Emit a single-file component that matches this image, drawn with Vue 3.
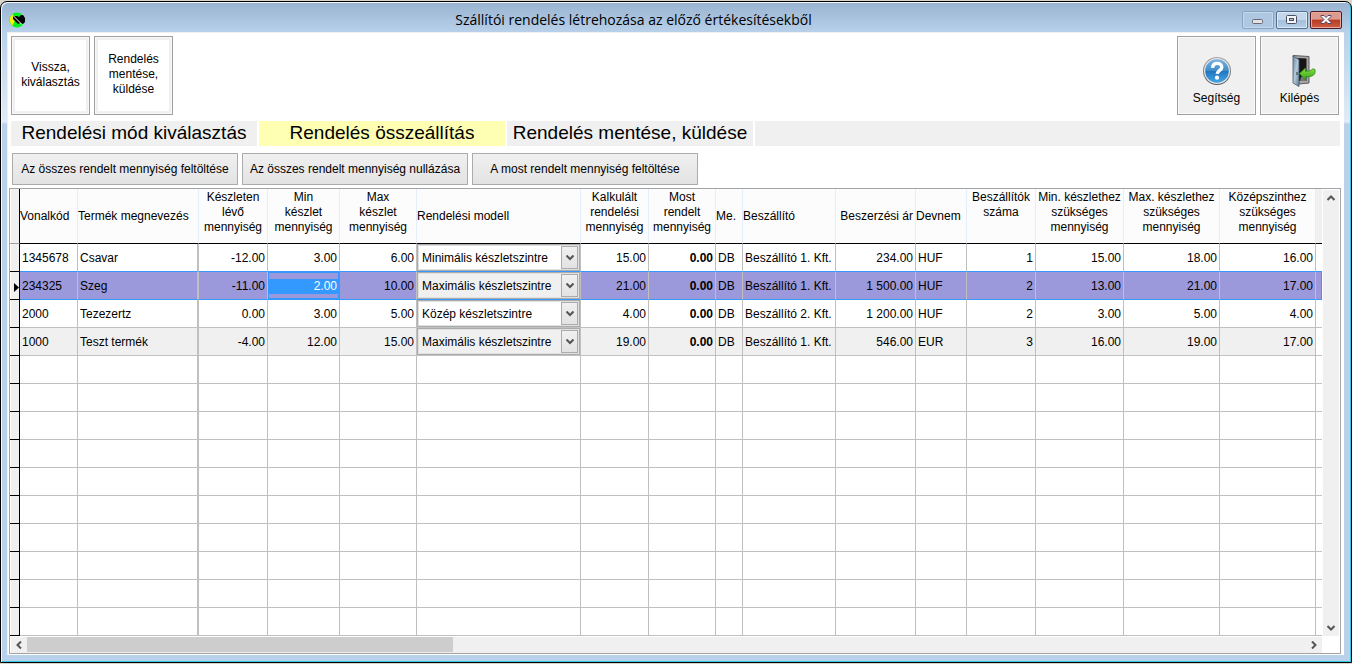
<script setup>
import { ref } from 'vue'

const models = ['Minimális készletszintre', 'Maximális készletszintre', 'Közép készletszintre']

const columns = [
  { key: 'code', label: 'Vonalkód', cls: 'c-code start' },
  { key: 'name', label: 'Termék megnevezés', cls: 'c-name start' },
  { key: 'stock', label: 'Készleten\nlévő\nmennyiség', cls: 'c-stock num' },
  { key: 'min', label: 'Min\nkészlet\nmennyiség', cls: 'c-min num' },
  { key: 'max', label: 'Max\nkészlet\nmennyiség', cls: 'c-max num' },
  { key: 'model', label: 'Rendelési modell', cls: 'c-model start' },
  { key: 'calc', label: 'Kalkulált\nrendelési\nmennyiség', cls: 'c-calc num' },
  { key: 'now', label: 'Most\nrendelt\nmennyiség', cls: 'c-now num strong' },
  { key: 'unit', label: 'Me.', cls: 'c-unit start' },
  { key: 'supplier', label: 'Beszállító', cls: 'c-supplier start' },
  { key: 'price', label: 'Beszerzési ár', cls: 'c-price num single' },
  { key: 'currency', label: 'Devnem', cls: 'c-currency start' },
  { key: 'suppliers', label: 'Beszállítók\nszáma', cls: 'c-suppliers num' },
  { key: 'needMin', label: 'Min. készlethez\nszükséges\nmennyiség', cls: 'c-needmin num' },
  { key: 'needMax', label: 'Max. készlethez\nszükséges\nmennyiség', cls: 'c-needmax num' },
  { key: 'needMid', label: 'Középszinthez\nszükséges\nmennyiség', cls: 'c-needmid num' },
]

const rows = ref([
  { code: '1345678', name: 'Csavar', stock: '-12.00', min: '3.00', max: '6.00', model: models[0], calc: '15.00', now: '0.00', unit: 'DB', supplier: 'Beszállító 1. Kft.', price: '234.00', currency: 'HUF', suppliers: '1', needMin: '15.00', needMax: '18.00', needMid: '16.00' },
  { code: '234325', name: 'Szeg', stock: '-11.00', min: '2.00', max: '10.00', model: models[1], calc: '21.00', now: '0.00', unit: 'DB', supplier: 'Beszállító 1. Kft.', price: '1 500.00', currency: 'HUF', suppliers: '2', needMin: '13.00', needMax: '21.00', needMid: '17.00' },
  { code: '2000', name: 'Tezezertz', stock: '0.00', min: '3.00', max: '5.00', model: models[2], calc: '4.00', now: '0.00', unit: 'DB', supplier: 'Beszállító 2. Kft.', price: '1 200.00', currency: 'HUF', suppliers: '2', needMin: '3.00', needMax: '5.00', needMid: '4.00' },
  { code: '1000', name: 'Teszt termék', stock: '-4.00', min: '12.00', max: '15.00', model: models[1], calc: '19.00', now: '0.00', unit: 'DB', supplier: 'Beszállító 1. Kft.', price: '546.00', currency: 'EUR', suppliers: '3', needMin: '16.00', needMax: '19.00', needMid: '17.00' },
])
const selected = ref(1)
const emptyRows = 10
</script>

<template>
  <div class="desktop">
    <div class="window">
      <header class="titlebar">
        <svg class="app-icon" viewBox="0 0 16 16" aria-hidden="true">
          <circle cx="8" cy="8" r="7.5" fill="#00f01e" />
          <path d="M3.5 2.2A7.5 7.5 0 0 0 3.5 13.8L6 8Z" fill="#fff200" />
          <path d="M4 4H8L10 5L12 3H14L16 6V10L14 12L11 11L9 12L4 7Z" fill="#000" />
          <path d="M4 3.5L13 12.5" stroke="#fff" stroke-width="1" />
        </svg>
        <h1>Szállítói rendelés létrehozása az előző értékesítésekből</h1>
        <div class="win-buttons">
          <button class="win-btn dim" aria-label="Kis méret">
            <svg viewBox="0 0 30 16"><rect x="9.5" y="7.5" width="10" height="4" rx="1" fill="#e4e4e4" stroke="#686878" /></svg>
          </button>
          <button class="win-btn" aria-label="Teljes méret">
            <svg viewBox="0 0 30 16"><rect x="9.5" y="3.5" width="10" height="8" rx="1" fill="#f4f4f4" stroke="#4a5064" /><rect x="12.5" y="6.5" width="4" height="2" fill="#a9c0da" stroke="#4a5064" /></svg>
          </button>
          <button class="win-btn close" aria-label="Bezárás">
            <svg viewBox="0 0 30 16"><path d="M10 3.5H13L15 5.5L17 3.5H20V4.5L17 7.5L20 10.5V11.5H17L15 9.5L13 11.5H10V10.5L13 7.5L10 4.5Z" fill="#fafafa" stroke="#54486a" /></svg>
          </button>
        </div>
      </header>

      <main class="client">
        <div class="toolbar">
          <button class="tile framed">Vissza,<br />kiválasztás</button>
          <button class="tile framed">Rendelés<br />mentése,<br />küldése</button>
          <span class="spacer"></span>
          <button class="tile plain">
            <svg class="tile-icon" viewBox="0 0 32 32" aria-hidden="true">
              <defs>
                <linearGradient id="blue" x1="0" y1="0" x2="0" y2="1">
                  <stop offset="0" stop-color="#7fb3dd" />
                  <stop offset="0.48" stop-color="#3f8ccb" />
                  <stop offset="0.52" stop-color="#2277bf" />
                  <stop offset="1" stop-color="#45a5e6" />
                </linearGradient>
                <linearGradient id="rim" x1="0" y1="0" x2="0" y2="1">
                  <stop offset="0" stop-color="#a8a8a8" />
                  <stop offset="1" stop-color="#5c5c5c" />
                </linearGradient>
              </defs>
              <circle cx="16" cy="16" r="14" fill="url(#rim)" />
              <circle cx="16" cy="16" r="13" fill="#dfe5ea" />
              <circle cx="16" cy="16" r="11.8" fill="url(#blue)" />
              <path d="M11.6 12.8C11.8 9.6 13.6 8.4 16.2 8.4C19 8.4 20.8 10 20.8 12.2C20.8 15.4 16.4 15.2 16.2 18.8" fill="none" stroke="#fff" stroke-width="3.4" />
              <circle cx="16" cy="22.7" r="2.1" fill="#fff" />
            </svg>
            <span>Segítség</span>
          </button>
          <button class="tile plain">
            <svg class="tile-icon" viewBox="0 0 32 32" aria-hidden="true">
              <defs>
                <linearGradient id="door" x1="0" y1="0" x2="1" y2="1">
                  <stop offset="0" stop-color="#6f8ba2" />
                  <stop offset="0.5" stop-color="#b4c9d9" />
                  <stop offset="1" stop-color="#5f7d96" />
                </linearGradient>
                <linearGradient id="arrow" x1="0" y1="0" x2="0" y2="1">
                  <stop offset="0" stop-color="#8ee04a" />
                  <stop offset="1" stop-color="#2fa012" />
                </linearGradient>
              </defs>
              <path d="M9 0.5L25 1.5V28L15 29Z" fill="#a6a6a6" stroke="#5d5d5d" />
              <path d="M11 3L22.5 3.5V26H15Z" fill="#151515" />
              <path d="M17 22L22.5 19V26H16Z" fill="#777" />
              <path d="M9 1L15 4.5V31.5L9 28Z" fill="url(#door)" stroke="#48586a" stroke-width="0.8" />
              <path d="M13 17V20" stroke="#26323e" />
              <path d="M15.5 18.5L21.5 13V16.3C25 16.3 27.5 15.8 28.6 13.8L31 14.5C32 20 28.5 22 21.5 21.8V25Z" fill="url(#arrow)" stroke="#2b9410" stroke-width="0.8" />
            </svg>
            <span>Kilépés</span>
          </button>
        </div>

        <ol class="steps">
          <li>Rendelési mód kiválasztás</li>
          <li class="current" aria-current="step">Rendelés összeállítás</li>
          <li>Rendelés mentése, küldése</li>
          <li class="rest" aria-hidden="true"></li>
        </ol>

        <div class="actions">
          <button>Az összes rendelt mennyiség feltöltése</button>
          <button>Az összes rendelt mennyiség nullázása</button>
          <button>A most rendelt mennyiség feltöltése</button>
        </div>

        <section class="grid">
          <div class="viewport">
            <table>
              <colgroup>
                <col class="c-mark" />
                <col v-for="c in columns" :key="c.key" :class="c.cls.split(' ')[0]" />
                <col />
              </colgroup>
              <thead>
                <tr>
                  <th class="mark"></th>
                  <th v-for="c in columns" :key="c.key" scope="col" :class="c.cls">{{ c.label }}</th>
                  <th class="fill"></th>
                </tr>
              </thead>
              <tbody>
                <tr v-for="(r, i) in rows" :key="r.code" :class="{ alt: i === 3, selected: i === selected, before: i === selected - 1 }" @click="selected = i">
                  <td class="mark">
                    <svg v-if="i === selected" viewBox="0 0 5 9" aria-hidden="true"><path d="M0 0L5 4.5L0 9Z" /></svg>
                  </td>
                  <td v-for="c in columns" :key="c.key" :class="[c.cls, { editing: i === selected && c.key === 'min' }]">
                    <div v-if="c.key === 'model'" class="combo">
                      <select v-model="r.model" :aria-label="'Rendelési modell: ' + r.name">
                        <option v-for="m in models" :key="m">{{ m }}</option>
                      </select>
                      <span class="drop" aria-hidden="true">
                        <svg viewBox="0 0 8 6"><path d="M0.5 0.5L4 4L7.5 0.5" /></svg>
                      </span>
                    </div>
                    <input v-else-if="i === selected && c.key === 'min'" v-model="r.min" type="text" :aria-label="'Min készlet mennyiség: ' + r.name" />
                    <template v-else>{{ r[c.key] }}</template>
                  </td>
                  <td class="fill"></td>
                </tr>
                <tr v-for="n in emptyRows" :key="'e' + n" class="empty">
                  <td class="mark"></td>
                  <td v-for="c in columns" :key="c.key" :class="c.cls"></td>
                  <td class="fill"></td>
                </tr>
              </tbody>
            </table>
          </div>
          <div class="vscroll">
            <button aria-label="Fel"><svg viewBox="0 0 8 6"><path d="M0.5 5L4 1.5L7.5 5" /></svg></button>
            <button aria-label="Le"><svg viewBox="0 0 8 6"><path d="M0.5 1L4 4.5L7.5 1" /></svg></button>
          </div>
          <div class="hscroll">
            <button aria-label="Balra"><svg viewBox="0 0 6 8"><path d="M5 0.5L1.5 4L5 7.5" /></svg></button>
            <div class="track"><div class="thumb"></div></div>
            <button aria-label="Jobbra"><svg viewBox="0 0 6 8"><path d="M1 0.5L4.5 4L1 7.5" /></svg></button>
          </div>
        </section>
      </main>
    </div>
  </div>
</template>

<style>
html,
body {
  margin: 0;
  background: #dcdcdc;
}
</style>

<style scoped>
* {
  box-sizing: border-box;
}
.desktop {
  min-height: 100vh;
  padding: 1px 0;
  background: #d8d6cc;
  font: 12px/15px "Liberation Sans", Arial, sans-serif;
  color: #000;
  display: flex;
}
button,
input,
select {
  font: inherit;
  color: inherit;
  margin: 0;
}
svg {
  display: block;
}
.window {
  flex: 1;
  min-width: 0;
  display: flex;
  flex-direction: column;
  padding: 1px 7px 7px 6px;
  border: 1px solid #000;
  border-radius: 7px 7px 0 0;
  box-shadow: inset 1px 1px #f2f7fc, inset -1px -1px #35c8e4;
  background: linear-gradient(#98b3d1 0, #b9d1ea 31px, #e2ebf6 120px, #b9d1ea 122px);
}
.titlebar {
  display: flex;
  align-items: flex-start;
  height: 29px;
  padding: 0 2px;
}
.app-icon {
  width: 16px;
  height: 16px;
  margin-top: 9px;
}
h1 {
  flex: 1;
  margin: 7px 0 0;
  text-align: center;
  font: 14px/20px "Open Sans", "Noto Sans", sans-serif;
}
.win-buttons {
  display: flex;
  gap: 2px;
  margin-top: 8px;
}
.win-btn {
  width: 32px;
  height: 18px;
  padding: 0;
  border: 1px solid #55708f;
  border-radius: 2px;
  box-shadow: inset 0 0 0 1px #dce9f6;
  background: linear-gradient(#c3d6ea 50%, #a3bedb 50%, #b6cfe8);
}
.win-btn.dim {
  border-color: #88a3c0;
  box-shadow: inset 0 0 0 1px #c6d9ec;
  background: #afc8e1;
}
.win-btn.close {
  border-color: #4c1d26;
  box-shadow: inset 0 0 0 1px #e6a99f;
  background: linear-gradient(#dd9b8e 45%, #b93a22 50%, #cf5f45);
}
.client {
  flex: 1;
  display: flex;
  flex-direction: column;
  padding: 3px 3px 1px 1px;
  border: 1px solid #f0f0f0;
  border-width: 1px 0 0 1px;
  background: #fff;
}
.toolbar {
  display: flex;
  gap: 4px;
  padding: 0 2px;
}
.spacer {
  flex: 1;
}
.tile {
  width: 79px;
  height: 79px;
  padding: 0;
  border: 1px solid #a0a0a0;
  background: #fff;
}
.framed {
  box-shadow: inset 0 0 0 1px #f8f8f8, inset 0 0 0 3px #f0f0f0;
  padding-bottom: 2px;
}
.plain {
  display: flex;
  flex-direction: column;
  align-items: center;
  justify-content: flex-end;
  gap: 4px;
  padding-bottom: 8px;
  background: #f0f0f0;
  box-shadow: inset 0 0 0 1px #fafafa;
}
.tile-icon {
  width: 32px;
  height: 32px;
}
.steps {
  display: flex;
  gap: 2px;
  margin: 6px 1px 7px 2px;
  padding: 0;
  list-style: none;
  font-size: 19px;
  line-height: 24px;
}
.steps li {
  flex: 0 0 246px;
  height: 25px;
  text-align: center;
  white-space: nowrap;
  background: #f0f0f0;
}
.steps .current {
  background: #ffffb4;
}
.steps .rest {
  flex: 1;
}
.actions {
  display: flex;
  gap: 4px;
  padding-left: 3px;
  margin-bottom: 3px;
}
.actions button {
  width: 226px;
  height: 32px;
  padding: 0;
  white-space: nowrap;
  border: 1px solid #acacac;
  background: linear-gradient(#f0f0f0, #e3e3e3);
}
.grid {
  flex: 1;
  display: grid;
  grid-template-columns: minmax(0, 1fr) 17px;
  grid-template-rows: auto 17px;
  border: 1px solid #a0a4a8;
  padding-right: 1px;
}
.viewport {
  overflow: hidden;
}
table {
  width: 100%;
  table-layout: fixed;
  border-collapse: separate;
  border-spacing: 0;
}
.c-mark { width: 10px; }
.c-code { width: 58px; }
.c-name { width: 121px; }
.c-stock { width: 69px; }
.c-min { width: 72px; }
.c-max { width: 77px; }
.c-model { width: 164px; }
.c-calc { width: 68px; }
.c-now { width: 67px; }
.c-unit { width: 27px; }
.c-supplier { width: 93px; }
.c-price { width: 80px; }
.c-currency { width: 51px; }
.c-suppliers { width: 69px; }
.c-needmin { width: 88px; }
.c-needmax { width: 96px; }
.c-needmid { width: 96px; }
th {
  height: 55px;
  padding: 1px 0 0;
  vertical-align: top;
  font-weight: normal;
  white-space: pre;
  overflow: hidden;
  background: #fcfcfc;
  border-right: 1px solid #e4eefa;
  border-bottom: 1px solid #000;
}
th.start,
th.single {
  padding: 0;
  vertical-align: middle;
  text-align: left;
}
th.single {
  padding-right: 2px;
  text-align: right;
}
th.fill {
  background: #f0f0f0;
  border-right: 0;
}
td {
  height: 28px;
  padding: 2px 2px 0;
  white-space: nowrap;
  overflow: hidden;
  border-right: 1px solid #c0c0c0;
  border-bottom: 1px solid #c0c0c0;
}
td.c-name {
  border-right-width: 2px;
}
td.num {
  text-align: right;
}
td.strong {
  font-weight: bold;
}
td.fill {
  padding: 0;
  border-right: 0;
}
.mark,
td.mark {
  padding: 0;
  background: #f0f0f0;
  border-right: 1px solid #000;
  border-bottom: 1px solid #000;
  box-shadow: inset 1px 0 #fff;
}
th.mark {
  border-bottom-color: #a0a0a0;
}
.mark svg {
  width: 5px;
  height: 9px;
  margin: 3px 0 0 4px;
}
.alt td:not(.mark):not(.fill) {
  background: #f0f0f0;
}
.before td:not(.mark),
.selected td:not(.mark) {
  border-bottom-color: #3399ff;
}
.selected td:not(.mark) {
  background: #9b99db;
}
.selected td.fill {
  border-right: 1px solid #3399ff;
}
.selected td.editing {
  padding: 2px 0 0;
  border-right-color: #3399ff;
  box-shadow: inset 0 0 0 1px #3399ff;
}
.editing input {
  display: block;
  width: 100%;
  height: 15px;
  padding: 0 2px;
  border: 0;
  outline: 0;
  text-align: right;
  color: #fff;
  background: #3399ff;
}
td.c-model {
  padding: 0;
}
.combo {
  position: relative;
  height: 27px;
  border: 1px solid #acacac;
  box-shadow: inset 0 0 0 1px #e0e0e0;
  background: #fff;
}
.alt .combo,
.selected .combo {
  background: #f0f0f0;
}
.combo select {
  appearance: none;
  display: block;
  width: 100%;
  height: 25px;
  padding: 2px 20px 0 4px;
  border: 0;
  outline: 0;
  background: transparent;
}
.drop {
  position: absolute;
  top: 1px;
  right: 1px;
  bottom: 1px;
  width: 17px;
  display: grid;
  place-items: center;
  pointer-events: none;
  border: 1px solid #acacac;
  background: linear-gradient(#f0f0f0, #e3e3e3);
}
.drop svg,
.vscroll svg {
  width: 8px;
  height: 6px;
}
.hscroll svg {
  width: 6px;
  height: 8px;
}
.drop path,
.vscroll path,
.hscroll path {
  fill: none;
  stroke: #555;
  stroke-width: 2;
}
.vscroll {
  display: flex;
  flex-direction: column;
  justify-content: space-between;
  margin: 1px 0 0 1px;
  background: #f0f0f0;
}
.hscroll {
  display: flex;
  margin: 1px 0 0 1px;
  background: #f0f0f0;
}
.vscroll button,
.hscroll button {
  display: grid;
  place-items: center;
  width: 16px;
  height: 16px;
  padding: 0;
  border: 0;
  background: #f0f0f0;
}
.track {
  flex: 1;
}
.thumb {
  width: 33.3%;
  height: 15px;
  background: #cdcdcd;
}
</style>
